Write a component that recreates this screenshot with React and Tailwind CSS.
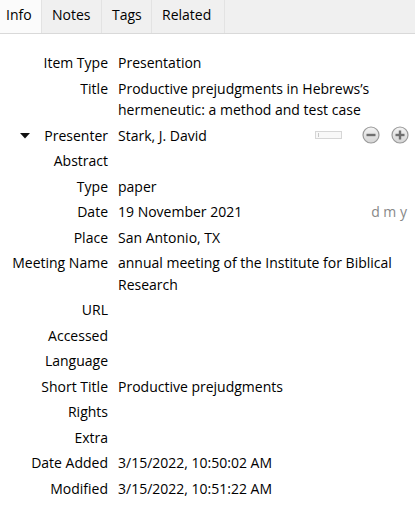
const tabs = [
  { t: "Info", w: "w-[42px] pl-[6px] bg-[#fbfbfb]" },
  { t: "Notes", w: "w-[60px] pl-[10px]" },
  { t: "Tags", w: "w-[50px] pl-[10px]" },
  { t: "Related", w: "w-[73px] pl-[10px]" },
];

const rows = [
  { label: "Item Type", value: "Presentation" },
  { label: "Title", value: "Productive prejudgments in Hebrews’s hermeneutic: a method and test case" },
  { label: "Presenter", value: "Stark, J. David", creator: true },
  { label: "Abstract", value: "" },
  { label: "Type", value: "paper" },
  { label: "Date", value: "19 November 2021", date: true },
  { label: "Place", value: "San Antonio, TX" },
  { label: "Meeting Name", value: "annual meeting of the Institute for Biblical Research" },
  { label: "URL", value: "" },
  { label: "Accessed", value: "" },
  { label: "Language", value: "" },
  { label: "Short Title", value: "Productive prejudgments" },
  { label: "Rights", value: "" },
  { label: "Extra", value: "" },
  { label: "Date Added", value: "3/15/2022, 10:50:02 AM" },
  { label: "Modified", value: "3/15/2022, 10:51:22 AM" },
];

function CircleBtn({ plus }) {
  return (
    <svg width="18" height="18" viewBox="0 0 18 18">
      <defs>
        <linearGradient id={plus ? "gp" : "gm"} x1="0" y1="0" x2="0" y2="1">
          <stop offset="0" stopColor="#f4f4f4" />
          <stop offset="1" stopColor="#d4d4d4" />
        </linearGradient>
      </defs>
      <circle cx="9" cy="9" r="8" fill={`url(#${plus ? "gp" : "gm"})`} stroke="#9a9a9a" strokeWidth="1.2" />
      <rect x="4.5" y="7.8" width="9" height="2.4" fill="#6f6f6f" />
      {plus && <rect x="7.8" y="4.5" width="2.4" height="9" fill="#6f6f6f" />}
    </svg>
  );
}

export default function App() {
  return (
    <div
      className="w-[415px] h-[505px] bg-white text-[14px] text-black overflow-hidden"
      style={{ fontFamily: '"Open Sans", "Noto Sans", sans-serif' }}
    >
      <div className="flex h-[34px] bg-[#f0f0f0] border-b border-[#d9d9d9]">
        {tabs.map((tab) => (
          <div
            key={tab.t}
            className={`flex items-center shrink-0 pb-[4px] border-r border-[#e3e3e3] whitespace-nowrap ${tab.w}`}
          >
            {tab.t}
          </div>
        ))}
      </div>

      <div className="pt-[16px]">
        {rows.map((r) => (
          <div key={r.label} className="flex py-[2px] leading-[21.5px]">
            <div className="relative w-[108px] shrink-0 text-right">
              {r.creator && (
                <svg className="absolute left-[20px] top-[8px]" width="10" height="6" viewBox="0 0 10 6">
                  <path d="M0 0H10L5 5.5Z" fill="#111" />
                </svg>
              )}
              {r.label}
            </div>
            <div className="flex flex-1 pl-[10px] pr-[12px]">
              <div className="flex-1">{r.value}</div>
              {r.date && <div className="text-[#888] mr-[-4px]">d m y</div>}
              {r.creator && (
                <div className="flex items-center gap-[11px] mr-[-6px]">
                  <div className="w-[27px] h-[8px] border border-[#d6d6d6] bg-[#f8f8f8] mr-[9px] relative">
                    <div className="absolute left-[2px] top-[1px] w-px h-[4px] bg-[#c8c8c8]" />
                  </div>
                  <CircleBtn />
                  <CircleBtn plus />
                </div>
              )}
            </div>
          </div>
        ))}
      </div>
    </div>
  );
}
